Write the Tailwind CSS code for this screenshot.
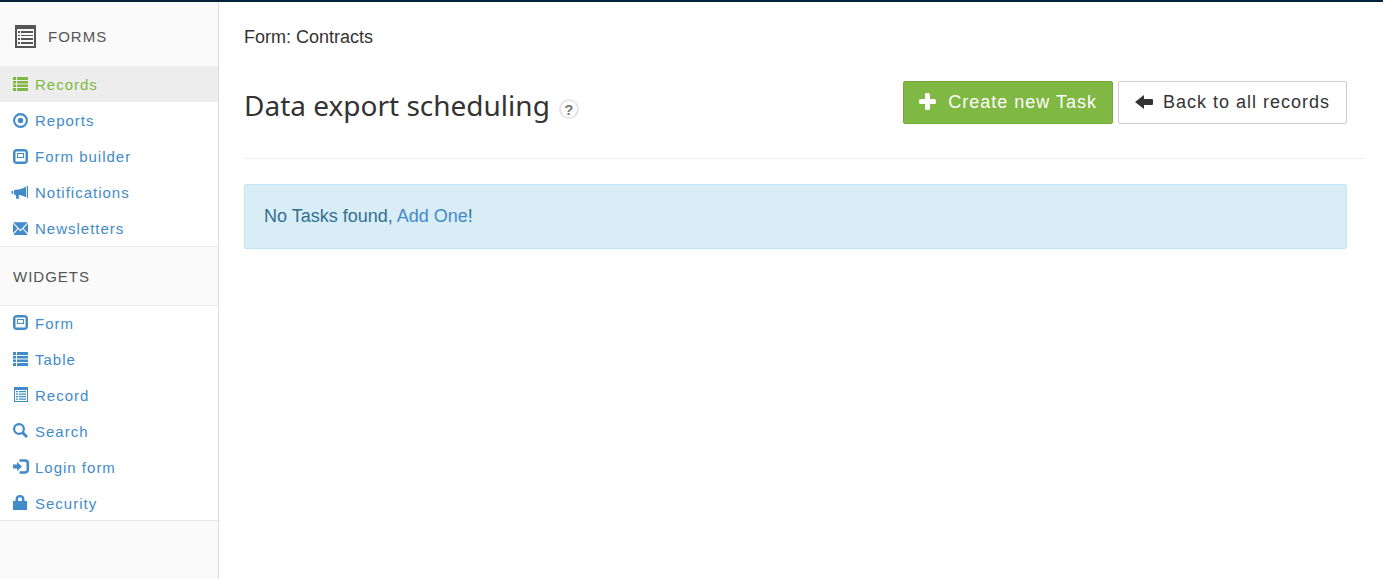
<!DOCTYPE html>
<html lang="en">
<head>
<meta charset="utf-8">
<meta name="viewport" content="width=device-width, initial-scale=1">
<title>Data export scheduling</title>
<script src="https://cdn.jsdelivr.net/npm/@tailwindcss/browser@4"></script>
</head>
<body class="flex min-h-screen flex-col bg-white font-['Liberation_Sans',Arial,sans-serif] text-[18px] text-[#333]">
<svg class="hidden" aria-hidden="true">
  <symbol id="list" viewBox="0 0 15 15"><path d="M0 1h3v3H0zM4 1h11v3H4zM0 5h3v2.500H0zM4 5h11v2.500H4zM0 8.500h3V11H0zM4 8.500h11V11H4zM0 12h3v3H0zM4 12h11v3H4z"/></symbol>
  <symbol id="target" viewBox="0 0 15 15"><circle cx="7.500" cy="7.500" r="6.400" fill="none" stroke="currentColor" stroke-width="2.100"/><circle cx="7.500" cy="7.500" r="2.700"/></symbol>
  <symbol id="form" viewBox="0 0 15 15"><path fill-rule="evenodd" d="M4 0h7a4 4 0 0 1 4 4v7a4 4 0 0 1-4 4H4a4 4 0 0 1-4-4V4a4 4 0 0 1 4-4zM3 2.500a.5.5 0 0 0-.5.5v9a.5.5 0 0 0 .5.500h9a.5.5 0 0 0 .5-.5V3a.5.5 0 0 0-.5-.5zM4 4h7v5H4zM5 5v3h5V5z"/></symbol>
  <symbol id="horn" viewBox="0 0 15 15" class="overflow-visible"><path d="M14 1h1v12h-1zM2.500 4.800C7 4.800 10 3.500 13.200 1.300v11c-2.500-1.500-4.900-2.200-7.600-2.400l.6 3.900H3.200l-.5-4L1 9.700V5.200zM-1.500 6H.2v2.800h-1.700z"/></symbol>
  <symbol id="mail" viewBox="0 0 15 15"><path d="M.2 1.200h14.600L7.500 8.700zM0 2.500l4.500 4.900L0 11.900zM15 2.500v9.400l-4.500-4.500zM5.200 8.100l2.300 2.400 2.300-2.400 5 5.900H.2z"/></symbol>
  <symbol id="listalt" viewBox="0 0 15 15"><path fill-rule="evenodd" d="M1 0h14v15H1zM2 3v11h12V3zM3 4h2v1.300H3zM6 4h7v1.300H6zM3 6.500h2v1.300H3zM6 6.500h7v1.300H6zM3 9h2v1.300H3zM6 9h7v1.300H6zM3 11.500h2v1.300H3zM6 11.500h7v1.300H6z"/></symbol>
  <symbol id="search" viewBox="0 0 15 15"><circle cx="6" cy="6" r="4.900" fill="none" stroke="currentColor" stroke-width="2.200"/><path d="m9.500 9.500 4.500 4.500" fill="none" stroke="currentColor" stroke-width="3"/></symbol>
  <symbol id="login" viewBox="0 0 15 15" class="overflow-visible"><path d="M0 5.500h4V3l5 4.500L4 12V9.500H0z"/><path d="M6.500 1.500H12a2.800 2.800 0 0 1 2.800 2.800v6.400a2.800 2.800 0 0 1-2.800 2.800H6.500" fill="none" stroke="currentColor" stroke-width="2.600"/></symbol>
  <symbol id="lock" viewBox="0 0 15 15"><path d="M0 6h2.500V4.200C2.500 1.600 4.300 0 7 0s4.500 1.600 4.500 4.200V6H14v9H0zM5 6h4V4.200C9 3 8.200 2.200 7 2.200S5 3 5 4.200z" fill-rule="evenodd"/></symbol>
</svg>

<header class="h-[2px] bg-[#062238]"></header>
<div class="flex grow">
  <aside class="w-[219px] shrink-0 border-r border-[#ddd] bg-[#fafafa] text-[15px] tracking-[1px] text-[#428bca]">
    <nav aria-label="Forms and widgets">
      <h2 class="flex h-16 items-center gap-[11px] pt-1.5 pl-[14px] text-[#555]">
        <svg class="mb-0.5 size-[23px] shrink-0" viewBox="0 0 23 23" fill="currentColor" aria-hidden="true"><path fill-rule="evenodd" d="M1 0h21v23H1zM3 4v17h17V4zM4 6h2v2H4zM7 6h12v2H7zM4 10h2v1H4zM7 10h12v1H7zM4 13h2v2H4zM7 13h12v2H7zM4 17h2v2H4zM7 17h12v2H7z"/></svg>
        FORMS
      </h2>
      <ul class="bg-white">
        <li><a href="#" aria-current="page" class="flex h-9 items-center gap-[7px] bg-[#ededed] pt-0.5 pl-[13px] text-[#7fb842]"><svg class="mb-[3px] size-[15px] overflow-visible" fill="currentColor"><use href="#list"/></svg>Records</a></li>
        <li><a href="#" class="flex h-9 items-center gap-[7px] pt-0.5 pl-[13px]"><svg class="mb-px size-[15px] overflow-visible" fill="currentColor"><use href="#target"/></svg>Reports</a></li>
        <li><a href="#" class="flex h-9 items-center gap-[7px] pt-0.5 pl-[13px]"><svg class="mb-px size-[15px] overflow-visible" fill="currentColor"><use href="#form"/></svg>Form builder</a></li>
        <li><a href="#" class="flex h-9 items-center gap-[7px] pt-0.5 pl-[13px]"><svg class="mb-px size-[15px] overflow-visible" fill="currentColor"><use href="#horn"/></svg>Notifications</a></li>
        <li><a href="#" class="flex h-9 items-center gap-[7px] pt-0.5 pl-[13px]"><svg class="mb-px size-[15px] overflow-visible" fill="currentColor"><use href="#mail"/></svg>Newsletters</a></li>
      </ul>
      <h2 class="flex h-[59px] items-center border-t border-[#e7e7e7] pt-0.5 pl-[13px] text-[#555]">WIDGETS</h2>
      <ul class="bg-white shadow-[inset_0_1px_0_#e7e7e7,inset_0_-1px_0_#e7e7e7]">
        <li><a href="#" class="flex h-9 items-center gap-[7px] pt-0.5 pl-[13px]"><svg class="mb-[3px] size-[15px] overflow-visible" fill="currentColor"><use href="#form"/></svg>Form</a></li>
        <li><a href="#" class="flex h-9 items-center gap-[7px] pt-0.5 pl-[13px]"><svg class="mb-[3px] size-[15px] overflow-visible" fill="currentColor"><use href="#list"/></svg>Table</a></li>
        <li><a href="#" class="flex h-9 items-center gap-[7px] pt-0.5 pl-[13px]"><svg class="mb-[3px] size-[15px] overflow-visible" fill="currentColor"><use href="#listalt"/></svg>Record</a></li>
        <li><a href="#" class="flex h-9 items-center gap-[7px] pt-0.5 pl-[13px]"><svg class="mb-[3px] size-[15px] overflow-visible" fill="currentColor"><use href="#search"/></svg>Search</a></li>
        <li><a href="#" class="flex h-9 items-center gap-[7px] pt-0.5 pl-[13px]"><svg class="mb-[3px] size-[15px] overflow-visible" fill="currentColor"><use href="#login"/></svg>Login form</a></li>
        <li><a href="#" class="flex h-9 items-center gap-[7px] pt-0.5 pl-[13px]"><svg class="mb-[3px] size-[15px] overflow-visible" fill="currentColor"><use href="#lock"/></svg>Security</a></li>
      </ul>
    </nav>
  </aside>

  <main class="min-w-0 grow pl-[25px] pr-[17px] pt-[23px]">
    <p class="leading-6">Form: Contracts</p>
    <div class="mt-8 flex items-start justify-between border-b border-[#eee] pr-[19px] pb-[33px]">
      <div class="flex items-center gap-[9px] pt-1">
        <h1 class="font-['Noto_Sans','Open_Sans',sans-serif] text-[28px] leading-10">Data export scheduling</h1>
        <button type="button" aria-label="Help" class="mt-2 flex size-5 items-center justify-center rounded-full border-2 border-[#e6e6e6] bg-white text-[15px] leading-none font-bold text-[#777]">?</button>
      </div>
      <div class="flex gap-[5px] text-[18px] tracking-[1px]">
        <button type="button" class="flex h-[43px] items-center gap-3 rounded-[2px] border border-[#72a83a] bg-[#7fb842] px-[15px] text-white"><svg class="mb-0.5 size-[17px]" viewBox="0 0 17 17" fill="currentColor" aria-hidden="true"><path d="M6 1.500Q6 0 7.500 0h2Q11 0 11 1.500V6h4.500Q17 6 17 7.500v2Q17 11 15.500 11H11v4.500Q11 17 9.500 17h-2Q6 17 6 15.500V11H1.500Q0 11 0 9.500v-2Q0 6 1.500 6H6z"/></svg>Create new Task</button>
        <button type="button" class="flex h-[43px] items-center gap-[10px] rounded-[2px] border border-[#ccc] bg-white px-4"><svg class="mb-0.5 h-4 w-[18px]" viewBox="0 0 18 16" fill="currentColor" aria-hidden="true"><path d="M0 8 9 1v4h8q1 0 1 1v4q0 1-1 1H9v4z"/></svg>Back to all records</button>
      </div>
    </div>
    <div role="status" class="mt-[25px] mr-[19px] rounded-[2px] border border-[#bce8f1] bg-[#d9edf7] px-[19px] py-[19px] leading-[25px] text-[#31708f]">No Tasks found, <a href="#" class="text-[#428bca]">Add One</a>!</div>
  </main>
</div>
</body>
</html>
